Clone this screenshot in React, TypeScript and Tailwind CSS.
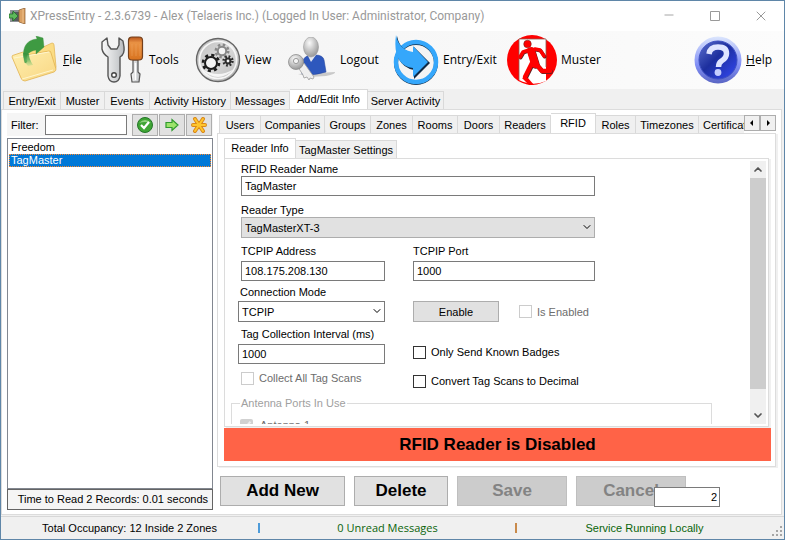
import { useState, type ReactNode } from 'react';
import { Minus, Square, X, ChevronDown, ChevronUp } from 'lucide-react';
import clsx from 'clsx';

const UI_FONT = "font-['Liberation_Sans',Arial,sans-serif]";
const MENU_FONT = "font-['Open_Sans','Noto_Sans',sans-serif]";
const TEXT_FIELD = 'block h-5 w-full border border-[#7a7a7a] bg-white px-[3px] text-[11px] leading-4 outline-none';

const MAIN_TABS = [
  { label: 'Entry/Exit', width: 'w-[58px]' },
  { label: 'Muster', width: 'w-[44px]' },
  { label: 'Events', width: 'w-[45px]' },
  { label: 'Activity History', width: 'w-[81px]' },
  { label: 'Messages', width: 'w-[59px]' },
  { label: 'Add/Edit Info', width: 'w-[78px]' },
  { label: 'Server Activity', width: 'w-[76px]' },
];

const INFO_TABS = [
  { label: 'Users', width: 'w-[42px]' },
  { label: 'Companies', width: 'w-[64px]' },
  { label: 'Groups', width: 'w-[46px]' },
  { label: 'Zones', width: 'w-[42px]' },
  { label: 'Rooms', width: 'w-[45px]' },
  { label: 'Doors', width: 'w-[42px]' },
  { label: 'Readers', width: 'w-[51px]' },
  { label: 'RFID', width: 'w-[45px]' },
  { label: 'Roles', width: 'w-[40px]' },
  { label: 'Timezones', width: 'w-[63px]' },
  { label: 'Certificates', width: 'w-[64px]' },
];

const READER_TABS = [
  { label: 'Reader Info', width: 'w-[72px]' },
  { label: 'TagMaster Settings', width: 'w-[101px]' },
];

const RECORDS = ['Freedom', 'TagMaster'];

interface TabStripProps {
  tabs: { label: string; width: string }[];
  active: string;
  onSelect: (label: string) => void;
}

function TabStrip({ tabs, active, onSelect }: TabStripProps) {
  return (
    <div role="tablist" className="flex h-5 items-end">
      {tabs.map(({ label, width }) => (
        <button
          key={label}
          role="tab"
          aria-selected={label === active}
          onClick={() => onSelect(label)}
          className={clsx(
            'shrink-0 whitespace-nowrap border-t border-r border-[#d9d9d9] text-[11px] leading-4 first:border-l',
            width,
            label === active ? 'h-5 bg-white pb-px' : 'h-[18px] bg-[#f0f0f0]',
          )}
        >
          {label}
        </button>
      ))}
    </div>
  );
}

function ToolButton({ icon, children, className }: { icon: ReactNode; children: ReactNode; className?: string }) {
  return (
    <button className={clsx('flex h-full shrink-0 items-center gap-1 text-left text-[12px] leading-4', className)}>
      {icon}
      <span>{children}</span>
    </button>
  );
}

function CheckField({ id, label, disabled }: { id: string; label: string; disabled?: boolean }) {
  return (
    <div className="flex items-center gap-[5px]">
      <input
        id={id}
        type="checkbox"
        disabled={disabled}
        className="size-[13px] shrink-0 appearance-none border border-[#333] bg-white checked:bg-[#555] disabled:border-[#ccc]"
      />
      <label htmlFor={id} className={clsx('whitespace-nowrap leading-[14px]', disabled && 'text-[#6d6d6d]')}>
        {label}
      </label>
    </div>
  );
}

function AppIcon() {
  return (
    <svg viewBox="0 0 17 16" className="h-4 w-[17px]">
      <rect x="1" y="2" width="11" height="12" fill="#8d9296" />
      <rect x="3" y="4" width="7" height="9" fill="#555b5e" />
      <path d="M10 2 16 0v16l-6-2Z" fill="#d9a063" stroke="#8a5a2d" strokeWidth=".7" />
      <path d="M14 1v14" stroke="#f0c08a" />
      <path d="M0 6h4V3l5 5-5 5v-3H0Z" fill="#5db85c" stroke="#23722a" strokeWidth=".8" />
    </svg>
  );
}

function FileIcon() {
  return (
    <svg viewBox="0 0 48 48" className="size-12">
      <defs>
        <linearGradient id="folder" x1="0" y1="0" x2="1" y2="1">
          <stop offset="0" stopColor="#fff0b0" />
          <stop offset="1" stopColor="#f8d682" />
        </linearGradient>
        <linearGradient id="arrow" x1="0" y1="1" x2="0" y2="0">
          <stop offset="0" stopColor="#8fcf7a" stopOpacity=".3" />
          <stop offset=".5" stopColor="#5bb05a" />
          <stop offset="1" stopColor="#2f8a38" />
        </linearGradient>
      </defs>
      <path d="m14 14 10-3 4 2 13-6q2 0 2 2l2 22q0 2-2 3l-16 5Z" fill="#fbdc83" stroke="#e3b85a" strokeWidth=".8" />
      <path d="M1 21q0-2 2-2l9-3 4 3 22-4q2 0 2 2l5 16q0 2-2 3l-29 9q-3 0-4-3Z" fill="url(#folder)" stroke="#e2b24f" strokeWidth=".8" />
      <path d="M3 22 38 16M11 43l31-9" stroke="#fff6cf" fill="none" />
      <path d="m14 27 2-1C14 18 19 15 25 14l0 4 8-7-1-9-7-2 1 3C14 4 10 14 14 27Z" fill="#3e9a42" stroke="#3e9342" strokeWidth=".4" />
      <path d="M12 17q1 9 5 13l5-1q-4-6-4-11Z" fill="url(#arrow)" opacity=".8" />
    </svg>
  );
}

function ToolsIcon() {
  return (
    <svg viewBox="0 0 44 48" className="h-12 w-11">
      <defs>
        <linearGradient id="steel">
          <stop offset="0" stopColor="#fafafa" />
          <stop offset="1" stopColor="#b9bcbf" />
        </linearGradient>
        <linearGradient id="handle" x1="0" y1="0" x2="0" y2="1">
          <stop offset="0" stopColor="#b9541a" />
          <stop offset=".25" stopColor="#e99244" />
          <stop offset="1" stopColor="#d8731f" />
        </linearGradient>
      </defs>
      <path d="M6 2 1 6v7q1 5 6 8v19q1 6 6 6t6-6V21q5-3 4-10l-1-6-4-3v7l-2 4h-6l-3-4Z" fill="url(#steel)" stroke="#555" strokeWidth="1.4" strokeLinejoin="round" />
      <circle cx="13" cy="39" r="2.3" fill="#fff" stroke="#444" strokeWidth="1.4" />
      <path d="M32 24h5v12l2 2-1 8h-7l-1-8 2-2Z" fill="url(#steel)" stroke="#555" strokeWidth="1.2" />
      <path d="M34.500 27v17" stroke="#fff" strokeWidth="1.4" />
      <rect x="27.500" y="1" width="14" height="23" rx="3.5" fill="url(#handle)" stroke="#74401c" strokeWidth="1.2" />
      <path d="M31 8v12M35 8v12M39 8v12" stroke="#f0a561" opacity=".5" />
    </svg>
  );
}

// Eight teeth: dash and gap are each a sixteenth of the circumference
function Gear({ cx, cy, r, color }: { cx: number; cy: number; r: number; color: string }) {
  const rim = r + 2;
  const tooth = (Math.PI * rim) / 8;
  return (
    <g stroke={color}>
      <circle cx={cx} cy={cy} r={rim} fill="none" strokeWidth="2.6" strokeDasharray={`${tooth} ${tooth}`} />
      <circle cx={cx} cy={cy} r={r} strokeWidth="2" fill="#f4f4f4" />
    </g>
  );
}

function ViewIcon() {
  return (
    <svg viewBox="0 0 46 46" className="size-[46px]">
      <defs>
        <linearGradient id="disc" x1="0" y1="0" x2="1" y2="1">
          <stop offset="0" stopColor="#aaa" />
          <stop offset=".5" stopColor="#eee" />
          <stop offset="1" stopColor="#9b9b9b" />
        </linearGradient>
      </defs>
      <circle cx="23" cy="23" r="21.500" fill="url(#disc)" stroke="#666" strokeWidth="1.4" />
      <circle cx="23" cy="23" r="18.500" fill="#ccc" fillOpacity=".6" stroke="#f6f6f6" strokeWidth="1.6" />
      <path d="M7 32q16 10 32 0-16 16-32 0" fill="#fff" opacity=".8" />
      <Gear cx={27} cy={14} r={4.2} color="#888" />
      <Gear cx={16} cy={26} r={6} color="#1c1c1c" />
      <Gear cx={33} cy={24} r={2.4} color="#2c2c2c" />
    </svg>
  );
}

function LogoutIcon() {
  return (
    <svg viewBox="0 0 48 46" className="h-[46px] w-12">
      <defs>
        <radialGradient id="head" cx=".4" cy=".3" r=".8">
          <stop offset="0" stopColor="#fafafa" />
          <stop offset="1" stopColor="#8c8c8c" />
        </radialGradient>
      </defs>
      <path d="M10 37 47 35q1 2-9 4l-16 1Z" fill="#c9c9c9" />
      <path d="M14 37 15 24q1-5 8-6h4q8 0 9 5l2 12q-11 4-24 2Z" fill="#2e58bd" stroke="#2545a0" strokeWidth=".6" />
      <path d="m19 17 4 8 5-7Z" fill="#e4e8f1" />
      <ellipse cx="23" cy="10" rx="7.5" ry="10" fill="url(#head)" stroke="#999" strokeWidth=".6" />
      <path d="m10 30 6-4 10 14-1 2-3-1-1 2-2-3-3 1-1-3Z" fill="#eee" stroke="#9d9d9d" strokeWidth=".8" />
      <circle cx="8" cy="25" r="7.5" fill="url(#head)" stroke="#8d8d8d" strokeWidth=".8" />
      <circle cx="8" cy="24" r="2.6" fill="#f4f4f4" stroke="#888" strokeWidth=".8" />
    </svg>
  );
}

function EntryExitIcon() {
  return (
    <svg viewBox="0 0 46 50" className="h-[50px] w-[46px]">
      <circle cx="23" cy="28" r="20" fill="#f4f4f4" stroke="#102a44" strokeWidth="4" />
      <circle cx="23" cy="27" r="20" fill="none" stroke="#35a7fb" strokeWidth="4.500" />
      <path d="M3 0q3 15 17 17v-6l16 16-16 16v-9Q-1 30 3 0Z" fill="#102a44" transform="translate(1 1)" />
      <path d="M3 0q3 15 17 17v-6l15 16-15 15v-9Q-1 30 3 0Z" fill="#35a7fb" />
    </svg>
  );
}

function MusterIcon() {
  const body = (
    <>
      <path d="m24 16 4 13" strokeWidth="8" />
      <path d="m22 15-6 2-3 5M28 14l5 1 4 6" strokeWidth="3.500" />
      <path d="m29 29 6 7h8M25 28l-7 14" strokeWidth="4.500" />
    </>
  );
  return (
    <svg viewBox="0 0 50 50" className="size-[50px]">
      <circle cx="25" cy="25" r="25" fill="#f00" />
      <path d="M12 4h27v42q-13 6-27-1Z" fill="#fff" />
      <path d="M12 45V4h27v28" fill="none" stroke="#8b5a50" strokeWidth=".8" />
      <g fill="none" stroke="#5b2020" strokeLinecap="round" strokeLinejoin="round" transform="translate(.7 .7)">
        {body}
      </g>
      <g fill="none" stroke="#f00" strokeLinecap="round" strokeLinejoin="round">
        {body}
      </g>
      <circle cx="20.500" cy="9" r="3.800" fill="#f00" stroke="#5b2020" strokeWidth=".5" />
      <path d="M15 43h6l6 7h-5Z" fill="#f00" />
    </svg>
  );
}

function HelpIcon() {
  return (
    <svg viewBox="0 0 48 48" className="size-12">
      <defs>
        <linearGradient id="ring" x1="0" y1="0" x2="0" y2="1">
          <stop offset="0" stopColor="#dce6fd" />
          <stop offset=".6" stopColor="#8290f6" />
          <stop offset="1" stopColor="#5a66c4" />
        </linearGradient>
        <linearGradient id="ball" x1="0" y1="0" x2="1" y2="1">
          <stop offset="0" stopColor="#5c71ce" />
          <stop offset=".45" stopColor="#1d2f9e" />
          <stop offset="1" stopColor="#3348f5" />
        </linearGradient>
      </defs>
      <circle cx="24" cy="24" r="23.5" fill="url(#ring)" />
      <circle cx="24" cy="24" r="19" fill="url(#ball)" stroke="#3d4fc1" />
      <path d="M15 18q1-7 9-7 8.500 0 8.500 6.500 0 4.500-5 7.500-3 2-3 6" fill="none" stroke="#dfe5ff" strokeWidth="5.5" />
      <circle cx="24" cy="36.5" r="3.4" fill="#c4cdff" />
    </svg>
  );
}

function ReaderForm() {
  const [readerName, setReaderName] = useState('TagMaster');
  const [address, setAddress] = useState('108.175.208.130');
  const [port, setPort] = useState('1000');
  const [interval, setIntervalMs] = useState('1000');

  return (
    <form className="min-w-0 flex-1 overflow-hidden pt-px pl-[6px] text-[11px]" onSubmit={(e) => e.preventDefault()}>
      <div className="w-[364px] pl-[7px]">
        <div className="pl-[3px]">
          <label htmlFor="reader-name" className="block leading-[14px]">RFID Reader Name</label>
          <input id="reader-name" value={readerName} onChange={(e) => setReaderName(e.target.value)} className={TEXT_FIELD} />
          <label htmlFor="reader-type" className="mt-[7px] block leading-[14px]">Reader Type</label>
          <div className="relative">
            <select id="reader-type" className="block h-[21px] w-full appearance-none border border-[#adadad] bg-[#e1e1e1] px-[3px] leading-4">
              <option>TagMasterXT-3</option>
            </select>
            <ChevronDown className="pointer-events-none absolute top-1 right-[2px] size-3" strokeWidth={2} />
          </div>
        </div>

        <div className="mt-[6px] grid grid-cols-[147px_1fr] gap-x-7">
          <div className="pl-[3px]">
            <label htmlFor="tcp-address" className="mb-[3px] block leading-[14px]">TCPIP Address</label>
            <input id="tcp-address" value={address} onChange={(e) => setAddress(e.target.value)} className={TEXT_FIELD} />
          </div>
          <div>
            <label htmlFor="tcp-port" className="mb-[3px] block leading-[14px]">TCPIP Port</label>
            <input id="tcp-port" value={port} onChange={(e) => setPort(e.target.value)} className={TEXT_FIELD} />
          </div>
        </div>

        <div className="mt-1 grid grid-cols-[147px_1fr] items-end gap-x-7">
          <div>
            <label htmlFor="connection-mode" className="mb-[2px] block pl-[2px] leading-[14px]">Connection Mode</label>
            <div className="relative">
              <select id="connection-mode" className="block h-[21px] w-full appearance-none border border-[#7a7a7a] bg-white px-[3px] leading-4">
                <option>TCPIP</option>
              </select>
              <ChevronDown className="pointer-events-none absolute top-1 right-[2px] size-3" strokeWidth={2} />
            </div>
          </div>
          <div className="flex items-center gap-5">
            <button className="h-[21px] w-[86px] shrink-0 border border-[#adadad] bg-[#e1e1e1] leading-4">Enable</button>
            <CheckField id="is-enabled" label="Is Enabled" disabled />
          </div>
        </div>

        <div className="mt-[5px] grid grid-cols-[147px_1fr] items-end gap-x-7">
          <div>
            <label htmlFor="interval" className="mb-[3px] block pl-[3px] leading-[14px] whitespace-nowrap">Tag Collection Interval (ms)</label>
            <input id="interval" value={interval} onChange={(e) => setIntervalMs(e.target.value)} className={TEXT_FIELD} />
          </div>
          <div className="pb-[5px]">
            <CheckField id="known-badges" label="Only Send Known Badges" />
          </div>
        </div>

        <div className="mt-[7px] grid grid-cols-[147px_1fr] items-end gap-x-7">
          <div className="pb-[3px] pl-[3px]">
            <CheckField id="collect-all" label="Collect All Tag Scans" disabled />
          </div>
          <CheckField id="to-decimal" label="Convert Tag Scans to Decimal" />
        </div>
      </div>

      <fieldset disabled className="mt-2 h-20 w-[481px] max-w-full border border-[#dcdcdc] px-2">
        <legend className="px-[1px] leading-[14px] text-[#a0a0a0]">Antenna Ports In Use</legend>
        <div className="mt-2 flex items-center gap-[7px] text-[#6d6d6d]">
          <input id="antenna-1" type="checkbox" defaultChecked className="size-[13px]" />
          <label htmlFor="antenna-1" className="leading-[14px]">Antenna 1</label>
        </div>
      </fieldset>
    </form>
  );
}

export default function App() {
  const [mainTab, setMainTab] = useState('Add/Edit Info');
  const [infoTab, setInfoTab] = useState('RFID');
  const [readerTab, setReaderTab] = useState('Reader Info');
  const [selected, setSelected] = useState('TagMaster');
  const [filter, setFilter] = useState('');

  return (
    <div className={clsx('flex h-screen w-full flex-col overflow-hidden border border-[#5f86a8] bg-[#f0f0f0] text-[11px] text-black', UI_FONT)}>
      {/* Title bar */}
      <header className="flex h-[30px] shrink-0 items-center bg-white pl-2 text-[#999]">
        <AppIcon />
        <h1 className="ml-1 flex-1 truncate font-['Roboto',sans-serif] text-[12px]">
          XPressEntry - 2.3.6739 - Alex (Telaeris Inc.) (Logged In User: Administrator, Company)
        </h1>
        <div className="flex">
          <button aria-label="Minimize" className="flex w-[46px] justify-center"><Minus className="size-[14px]" strokeWidth={1.5} /></button>
          <button aria-label="Maximize" className="flex w-[46px] items-center justify-center">
            <svg viewBox="0 0 10 10" className="size-[10px]"><path d="M.5.5h9v9h-9Z" fill="none" stroke="currentColor" /></svg>
          </button>
          <button aria-label="Close" className="flex w-[46px] justify-center"><X className="size-4" strokeWidth={1.5} /></button>
        </div>
      </header>

      {/* Toolbar */}
      <nav className={clsx('flex h-[58px] shrink-0 items-center bg-linear-to-r from-[#f2f2f2] to-[#fcfcfc] pr-3 pl-[10px]', MENU_FONT)}>
        <ToolButton icon={<FileIcon />} className="w-[90px]"><u>F</u>ile</ToolButton>
        <ToolButton icon={<ToolsIcon />} className="w-[94px]">Tools</ToolButton>
        <ToolButton icon={<ViewIcon />} className="w-[93px]">View</ToolButton>
        <ToolButton icon={<LogoutIcon />} className="w-[105px]">Logout</ToolButton>
        <ToolButton icon={<EntryExitIcon />} className="w-[114px]">Entry/Exit</ToolButton>
        <ToolButton icon={<MusterIcon />}>Muster</ToolButton>
        <ToolButton icon={<HelpIcon />} className="ml-auto"><u>H</u>elp</ToolButton>
      </nav>

      <div className="pl-[2px]">
        <TabStrip tabs={MAIN_TABS} active={mainTab} onSelect={setMainTab} />
      </div>

      {/* Tab page */}
      <main className="mr-[2px] flex min-h-0 flex-1 gap-1 border border-[#dcdcdc] bg-white pt-[3px] pl-[5px]">
        <aside className="mb-1 flex w-[206px] shrink-0 flex-col">
          <div className="flex h-[23px] items-center bg-[#f5f5f5] pl-1">
            <label htmlFor="filter" className="w-[34px] leading-4">Filter:</label>
            <input id="filter" value={filter} onChange={(e) => setFilter(e.target.value)} className="mr-[5px] h-5 w-[82px] border border-[#7a7a7a] bg-white px-1" />
            <button aria-label="Apply filter" className="mr-px flex h-[22px] w-[26px] items-center justify-center border border-[#adadad] bg-[#e1e1e1]">
              <svg viewBox="0 0 16 16" className="size-4">
                <circle cx="8" cy="8" r="7.5" fill="#3fa535" stroke="#25762a" />
                <path d="M2 6q6-6 12 0-6-2-12 0" fill="#8fd07f" />
                <path d="m4 8 3 3 5-6" fill="none" stroke="#fff" strokeWidth="2.2" />
              </svg>
            </button>
            <button aria-label="Next" className="mr-px flex h-[22px] w-[26px] items-center justify-center border border-[#adadad] bg-[#e1e1e1]">
              <svg viewBox="0 0 14 14" className="size-[14px]">
                <path d="M1 4.500h6V1.500L13 7l-6 5.500v-3H1Z" fill="#9be36b" stroke="#2f9a2f" strokeWidth="1.2" />
              </svg>
            </button>
            <button aria-label="Clear filter" className="flex h-[22px] w-[26px] items-center justify-center border border-[#adadad] bg-[#e1e1e1]">
              <svg viewBox="0 0 16 16" className="size-4" strokeLinecap="round">
                <path d="M2 8h12M4 2l8 12M12 2 4 14" stroke="#d9881a" strokeWidth="4" />
                <path d="M2 8h12M4 2l8 12M12 2 4 14" stroke="#ffc62e" strokeWidth="2" />
              </svg>
            </button>
          </div>
          <ul role="listbox" aria-label="Records" className="mt-[2px] flex-1 border border-[#828790] bg-white p-px pt-[2px]">
            {RECORDS.map((record) => (
              <li
                key={record}
                role="option"
                aria-selected={record === selected}
                onClick={() => setSelected(record)}
                className={clsx(
                  'h-[13px] border px-px leading-[11px]',
                  record === selected ? 'border-dotted border-[#ff8728] bg-[#0078d7] text-white' : 'border-transparent',
                )}
              >
                {record}
              </li>
            ))}
          </ul>
          <p className="h-[21px] border border-[#646464] bg-[#f5f5f5] pr-1 text-right leading-[19px]">
            Time to Read 2 Records: 0.01 seconds
          </p>
        </aside>

        <section className="flex min-w-0 flex-1 flex-col pr-[5px]">
          <div className="flex items-end">
            <div className="min-w-0 flex-1 overflow-hidden pl-[2px]">
              <TabStrip tabs={INFO_TABS} active={infoTab} onSelect={setInfoTab} />
            </div>
            <div className="mb-[2px] flex">
              <button aria-label="Scroll tabs left" className="h-4 w-4 border border-[#adadad] bg-[#f0f0f0]">
                <svg viewBox="0 0 14 14" className="size-full"><path d="M8 4v6L5 7Z" /></svg>
              </button>
              <button aria-label="Scroll tabs right" className="h-4 w-4 border border-[#adadad] bg-[#f0f0f0]">
                <svg viewBox="0 0 14 14" className="size-full"><path d="M6 4v6l3-3Z" /></svg>
              </button>
            </div>
          </div>

          <div className="flex min-h-0 flex-1 flex-col border border-[#dcdcdc] pt-1 pr-1 pb-[5px] pl-[6px] shadow-[2px_1px_0_#f0f0f0]">
            <TabStrip tabs={READER_TABS} active={readerTab} onSelect={setReaderTab} />
            <div className="mr-[2px] flex min-h-0 flex-1 border border-[#dcdcdc] py-[2px] pr-[2px] shadow-[2px_1px_0_#f0f0f0]">
              <ReaderForm />
              <div className="flex w-4 shrink-0 flex-col items-center bg-[#f0f0f0] text-[#555]">
                <ChevronUp className="h-[17px] w-3" strokeWidth={3.5} />
                <div className="h-[211px] w-full bg-[#cdcdcd]" />
                <ChevronDown className="mt-auto h-[17px] w-3" strokeWidth={3.5} />
              </div>
            </div>
            <p className="mt-px flex h-[33px] shrink-0 items-center justify-center bg-[#ff6347] text-[17px] font-bold">
              RFID Reader is Disabled
            </p>
          </div>

          <div className="mt-[9px] mb-2 ml-[3px] flex h-[30px] shrink-0 gap-[9px] text-[17px] font-bold">
            <button className="w-[125px] border border-[#adadad] bg-[#e1e1e1]">Add New</button>
            <button className="w-[94px] border border-[#adadad] bg-[#e1e1e1]">Delete</button>
            <button disabled className="w-[110px] border border-[#bfbfbf] bg-[#ccc] text-[#838383]">Save</button>
            <div className="relative">
              <button disabled className="h-full w-[110px] border border-[#bfbfbf] bg-[#ccc] text-[#838383]">Cancel</button>
              <input
                aria-label="Record number"
                defaultValue="2"
                className="absolute top-[11px] left-[78px] h-5 w-[66px] border border-[#7a7a7a] bg-white px-[2px] text-right text-[11px] font-normal"
              />
            </div>
          </div>
        </section>
      </main>

      {/* Status bar */}
      <footer className="relative mt-px grid h-[23px] shrink-0 grid-cols-3 items-center border-t border-[#d7d7d7] pr-3 text-center">
        <span>Total Occupancy: 12 Inside 2 Zones</span>
        <span className={clsx('flex items-center text-[11px] text-[#0a640a]', MENU_FONT)}>
          <i className="h-[10px] w-[2px] bg-[#4d9bd9]" />
          <span className="flex-1">0 Unread Messages</span>
        </span>
        <span className="flex items-center text-[#0a640a]">
          <i className="h-[10px] w-[2px] bg-[#c98a4b]" />
          <span className="flex-1">Service Running Locally</span>
        </span>
        <svg viewBox="0 0 12 12" className="absolute right-[1px] bottom-[2px] size-3" fill="#a5a5a5">
          <path d="M9 1h2v2H9zM5 5h2v2H5zM9 5h2v2H9zM1 9h2v2H1zM5 9h2v2H5zM9 9h2v2H9z" />
        </svg>
      </footer>
    </div>
  );
}
